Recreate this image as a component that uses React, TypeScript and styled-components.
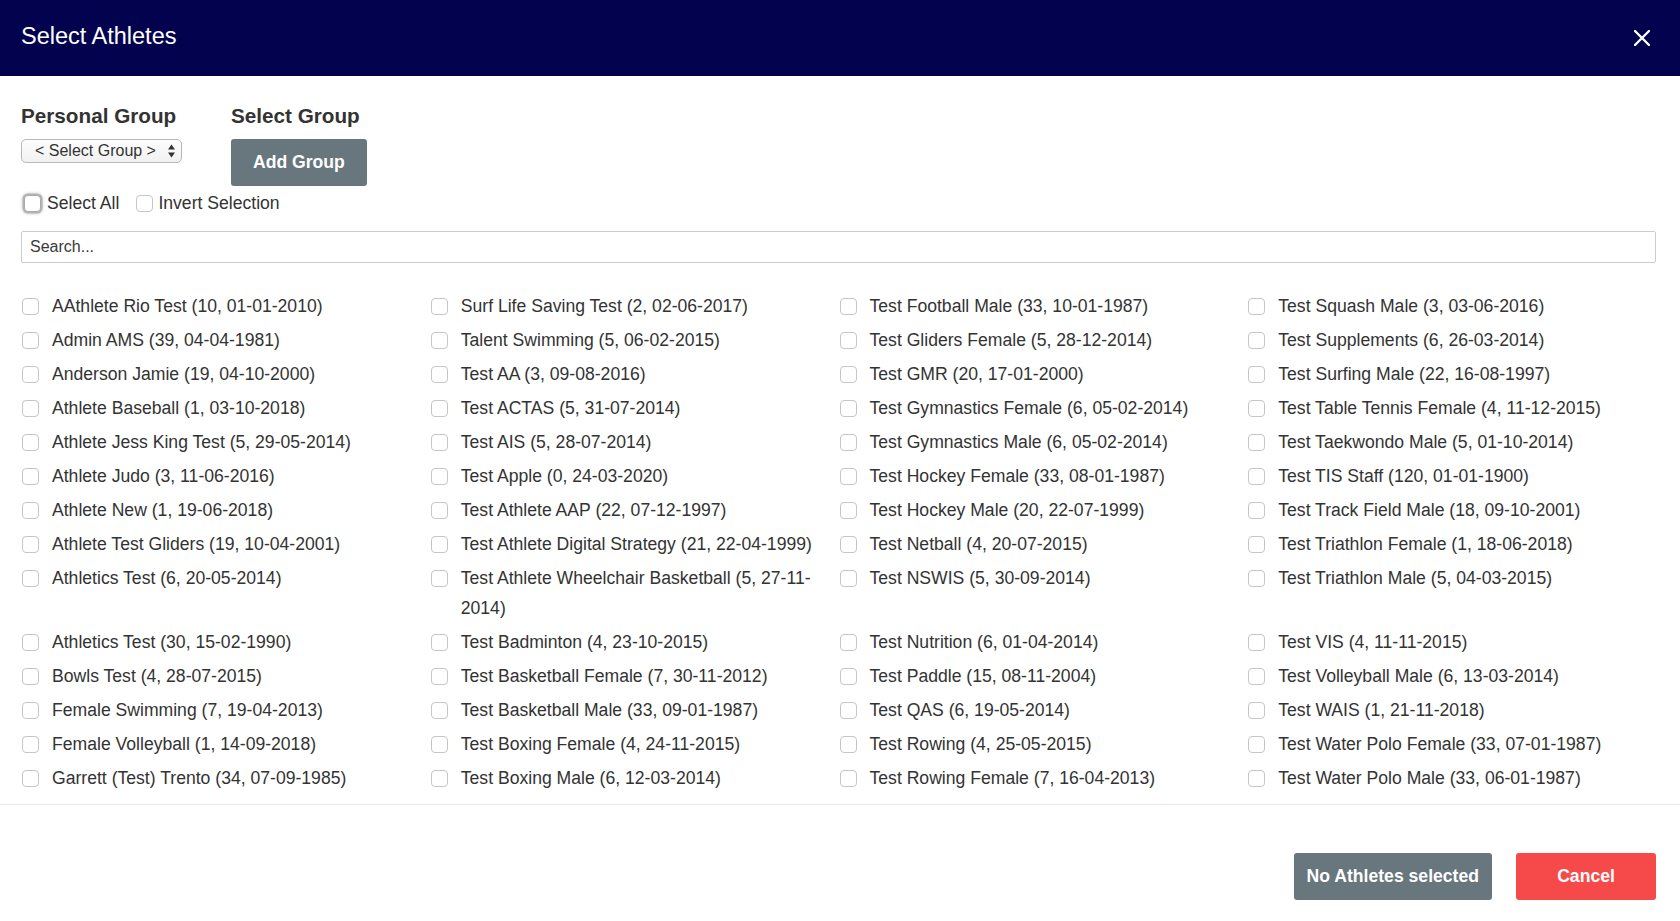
import React from "react";
import styled, { createGlobalStyle, css } from "styled-components";

const GlobalStyle = createGlobalStyle`
  html, body {
    margin: 0;
    padding: 0;
    background: #ffffff;
  }
  body {
    font-family: "Liberation Sans", Arial, Helvetica, sans-serif;
    color: #333333;
  }
  * { box-sizing: border-box; }
`;

const Modal = styled.div`
  height: 100vh;
  display: flex;
  flex-direction: column;
  overflow: hidden;
`;

const Header = styled.header`
  height: 76px;
  flex: 0 0 auto;
  background: #02024f;
  display: flex;
  align-items: center;
  justify-content: space-between;
  padding: 0 30px 4px 21px;
`;

const Title = styled.h1`
  margin: 0;
  font-size: 23.5px;
  line-height: 28px;
  font-weight: 400;
  color: #ffffff;
`;

const CloseButton = styled.button`
  width: 16px;
  height: 16px;
  padding: 0;
  margin-top: 4px;
  border: 0;
  background: transparent;
  cursor: pointer;
  display: flex;
  svg { display: block; }
`;

const Body = styled.main`
  flex: 1 1 auto;
  min-height: 0;
  display: flex;
  flex-direction: column;
  padding: 28px 24px 0 21px;
`;

const Controls = styled.div`
  display: flex;
  align-items: flex-start;
`;

const ControlGroup = styled.div<{ $width?: number }>`
  display: flex;
  flex-direction: column;
  align-items: flex-start;
  gap: 11px;
  ${(p) => p.$width && css`width: ${p.$width}px;`}
`;

const GroupHeading = styled.h2`
  margin: 0;
  font-size: 20.7px;
  line-height: 24px;
  font-weight: 700;
  color: #333333;
  white-space: nowrap;
`;

const SelectWrap = styled.div`
  position: relative;
  width: 161px;
  height: 24px;
`;

const GroupSelect = styled.select`
  appearance: none;
  -webkit-appearance: none;
  width: 100%;
  height: 100%;
  margin: 0;
  padding: 0 0 0 13px;
  border: 1px solid #b9b9b9;
  border-radius: 5px;
  background: linear-gradient(#fdfdfd, #f1f1f1);
  font-family: inherit;
  font-size: 16px;
  color: #333333;
  line-height: 22px;
`;

const SelectArrows = styled.svg`
  position: absolute;
  right: 7px;
  top: 5px;
  pointer-events: none;
`;

const SolidButton = styled.button<{ $tone: "slate" | "red"; $pad: number; $minWidth?: number }>`
  height: 47px;
  padding: 0 ${(p) => p.$pad}px;
  ${(p) => p.$minWidth && css`min-width: ${p.$minWidth}px;`}
  border: 0;
  border-radius: 3px;
  background: ${(p) => (p.$tone === "red" ? "#f64a4a" : "#68767e")};
  color: #ffffff;
  font-family: inherit;
  font-size: 17.6px;
  font-weight: 700;
  line-height: 1;
  white-space: nowrap;
  cursor: pointer;
`;

const CheckRow = styled.div`
  display: flex;
  align-items: center;
  height: 22px;
  margin-top: 6px;
  gap: 17px;
`;

const InlineLabel = styled.label<{ $gap: number }>`
  display: flex;
  align-items: center;
  gap: ${(p) => p.$gap}px;
  font-size: 17.6px;
  line-height: 22px;
  color: #333333;
  cursor: pointer;
`;

const Check = styled.input.attrs({ type: "checkbox" })<{ $focused?: boolean }>`
  appearance: none;
  -webkit-appearance: none;
  flex: 0 0 auto;
  width: 17px;
  height: 17px;
  margin: 0;
  border: 1px solid #c6c6c6;
  border-radius: 4px;
  background: #ffffff;
  cursor: pointer;
  ${(p) =>
    p.$focused &&
    css`
      margin-left: 3px;
      border-color: #a9a9a9;
      box-shadow: 0 0 0 1.5px #b4b4b4, 0 0 3px 2px rgba(0, 0, 0, 0.18);
    `}
  &:checked {
    background: #02024f;
    border-color: #02024f;
  }
`;

const SearchInput = styled.input`
  display: block;
  width: 100%;
  height: 35px;
  margin-top: 17px;
  padding: 0 8px;
  border: 1px solid #cccccc;
  border-radius: 2px;
  font-family: inherit;
  font-size: 16px;
  color: #333333;
  outline: none;
  &::placeholder { color: #3a3a3a; }
`;

const ListViewport = styled.div`
  flex: 1 1 auto;
  min-height: 0;
  margin-top: 28.6px;
  overflow-y: auto;
  scrollbar-width: none;
  &::-webkit-scrollbar { display: none; }
`;

const AthleteGrid = styled.div`
  display: grid;
  grid-template-columns: repeat(4, 1fr);
  row-gap: 4px;
`;

const AthleteItem = styled.label`
  display: flex;
  align-items: flex-start;
  padding-left: 1px;
  padding-right: 6px;
  cursor: pointer;
  input { margin-top: 6.5px; }
`;

const AthleteName = styled.span`
  margin-left: 13px;
  font-size: 17.6px;
  line-height: 30px;
  color: #333333;
`;

const Footer = styled.footer`
  flex: 0 0 auto;
  border-top: 1px solid #e8e8e8;
  display: flex;
  justify-content: flex-end;
  gap: 24px;
  padding: 48px 24px 21px;
`;

const columns: string[][] = [
  [
    "AAthlete Rio Test (10, 01-01-2010)",
    "Admin AMS (39, 04-04-1981)",
    "Anderson Jamie (19, 04-10-2000)",
    "Athlete Baseball (1, 03-10-2018)",
    "Athlete Jess King Test (5, 29-05-2014)",
    "Athlete Judo (3, 11-06-2016)",
    "Athlete New (1, 19-06-2018)",
    "Athlete Test Gliders (19, 10-04-2001)",
    "Athletics Test (6, 20-05-2014)",
    "Athletics Test (30, 15-02-1990)",
    "Bowls Test (4, 28-07-2015)",
    "Female Swimming (7, 19-04-2013)",
    "Female Volleyball (1, 14-09-2018)",
    "Garrett (Test) Trento (34, 07-09-1985)",
    "Gymnastics Test (5, 12-04-2016)",
    "Hockey Test (8, 02-03-2017)",
  ],
  [
    "Surf Life Saving Test (2, 02-06-2017)",
    "Talent Swimming (5, 06-02-2015)",
    "Test AA (3, 09-08-2016)",
    "Test ACTAS (5, 31-07-2014)",
    "Test AIS (5, 28-07-2014)",
    "Test Apple (0, 24-03-2020)",
    "Test Athlete AAP (22, 07-12-1997)",
    "Test Athlete Digital Strategy (21, 22-04-1999)",
    "Test Athlete Wheelchair Basketball (5, 27-11-2014)",
    "Test Badminton (4, 23-10-2015)",
    "Test Basketball Female (7, 30-11-2012)",
    "Test Basketball Male (33, 09-01-1987)",
    "Test Boxing Female (4, 24-11-2015)",
    "Test Boxing Male (6, 12-03-2014)",
    "Test Canoe Slalom (5, 14-05-2015)",
    "Test Cycling Male (20, 03-02-2000)",
  ],
  [
    "Test Football Male (33, 10-01-1987)",
    "Test Gliders Female (5, 28-12-2014)",
    "Test GMR (20, 17-01-2000)",
    "Test Gymnastics Female (6, 05-02-2014)",
    "Test Gymnastics Male (6, 05-02-2014)",
    "Test Hockey Female (33, 08-01-1987)",
    "Test Hockey Male (20, 22-07-1999)",
    "Test Netball (4, 20-07-2015)",
    "Test NSWIS (5, 30-09-2014)",
    "Test Nutrition (6, 01-04-2014)",
    "Test Paddle (15, 08-11-2004)",
    "Test QAS (6, 19-05-2014)",
    "Test Rowing (4, 25-05-2015)",
    "Test Rowing Female (7, 16-04-2013)",
    "Test Rowing Male (7, 16-04-2013)",
    "Test Rugby Male (22, 11-09-1997)",
  ],
  [
    "Test Squash Male (3, 03-06-2016)",
    "Test Supplements (6, 26-03-2014)",
    "Test Surfing Male (22, 16-08-1997)",
    "Test Table Tennis Female (4, 11-12-2015)",
    "Test Taekwondo Male (5, 01-10-2014)",
    "Test TIS Staff (120, 01-01-1900)",
    "Test Track Field Male (18, 09-10-2001)",
    "Test Triathlon Female (1, 18-06-2018)",
    "Test Triathlon Male (5, 04-03-2015)",
    "Test VIS (4, 11-11-2015)",
    "Test Volleyball Male (6, 13-03-2014)",
    "Test WAIS (1, 21-11-2018)",
    "Test Water Polo Female (33, 07-01-1987)",
    "Test Water Polo Male (33, 06-01-1987)",
    "Test Weightlifting (6, 20-08-2014)",
    "Test Wrestling Male (4, 01-06-2015)",
  ],
];

// Names run down each column, but rows line up across columns.
const rows = columns[0].map((_, r) => columns.map((col) => col[r]));

export default function App() {
  return (
    <>
      <GlobalStyle />
      <Modal>
        <Header>
          <Title>Select Athletes</Title>
          <CloseButton aria-label="Close">
            <svg width="16" height="16" viewBox="0 0 16 16">
              <path d="M1 1 L15 15 M15 1 L1 15" stroke="#ffffff" strokeWidth="2.4" strokeLinecap="round" />
            </svg>
          </CloseButton>
        </Header>

        <Body>
          <Controls>
            <ControlGroup $width={210}>
              <GroupHeading>Personal Group</GroupHeading>
              <SelectWrap>
                <GroupSelect defaultValue="">
                  <option value="">&lt; Select Group &gt;</option>
                </GroupSelect>
                <SelectArrows width="7" height="14" viewBox="0 0 7 14">
                  <path d="M3.5 0.5 L7 5.5 L0 5.5 Z M3.5 13.5 L7 8.5 L0 8.5 Z" fill="#333333" />
                </SelectArrows>
              </SelectWrap>
            </ControlGroup>
            <ControlGroup>
              <GroupHeading>Select Group</GroupHeading>
              <SolidButton $tone="slate" $pad={22}>Add Group</SolidButton>
            </ControlGroup>
          </Controls>

          <CheckRow>
            <InlineLabel $gap={6}>
              <Check $focused />
              Select All
            </InlineLabel>
            <InlineLabel $gap={5}>
              <Check />
              Invert Selection
            </InlineLabel>
          </CheckRow>

          <SearchInput placeholder="Search..." />

          <ListViewport>
            <AthleteGrid>
              {rows.flatMap((row, r) =>
                row.map((name, c) => (
                  <AthleteItem key={`${r}-${c}`}>
                    <Check />
                    <AthleteName>{name}</AthleteName>
                  </AthleteItem>
                ))
              )}
            </AthleteGrid>
          </ListViewport>
        </Body>

        <Footer>
          <SolidButton $tone="slate" $pad={13}>No Athletes selected</SolidButton>
          <SolidButton $tone="red" $pad={20} $minWidth={140}>Cancel</SolidButton>
        </Footer>
      </Modal>
    </>
  );
}
